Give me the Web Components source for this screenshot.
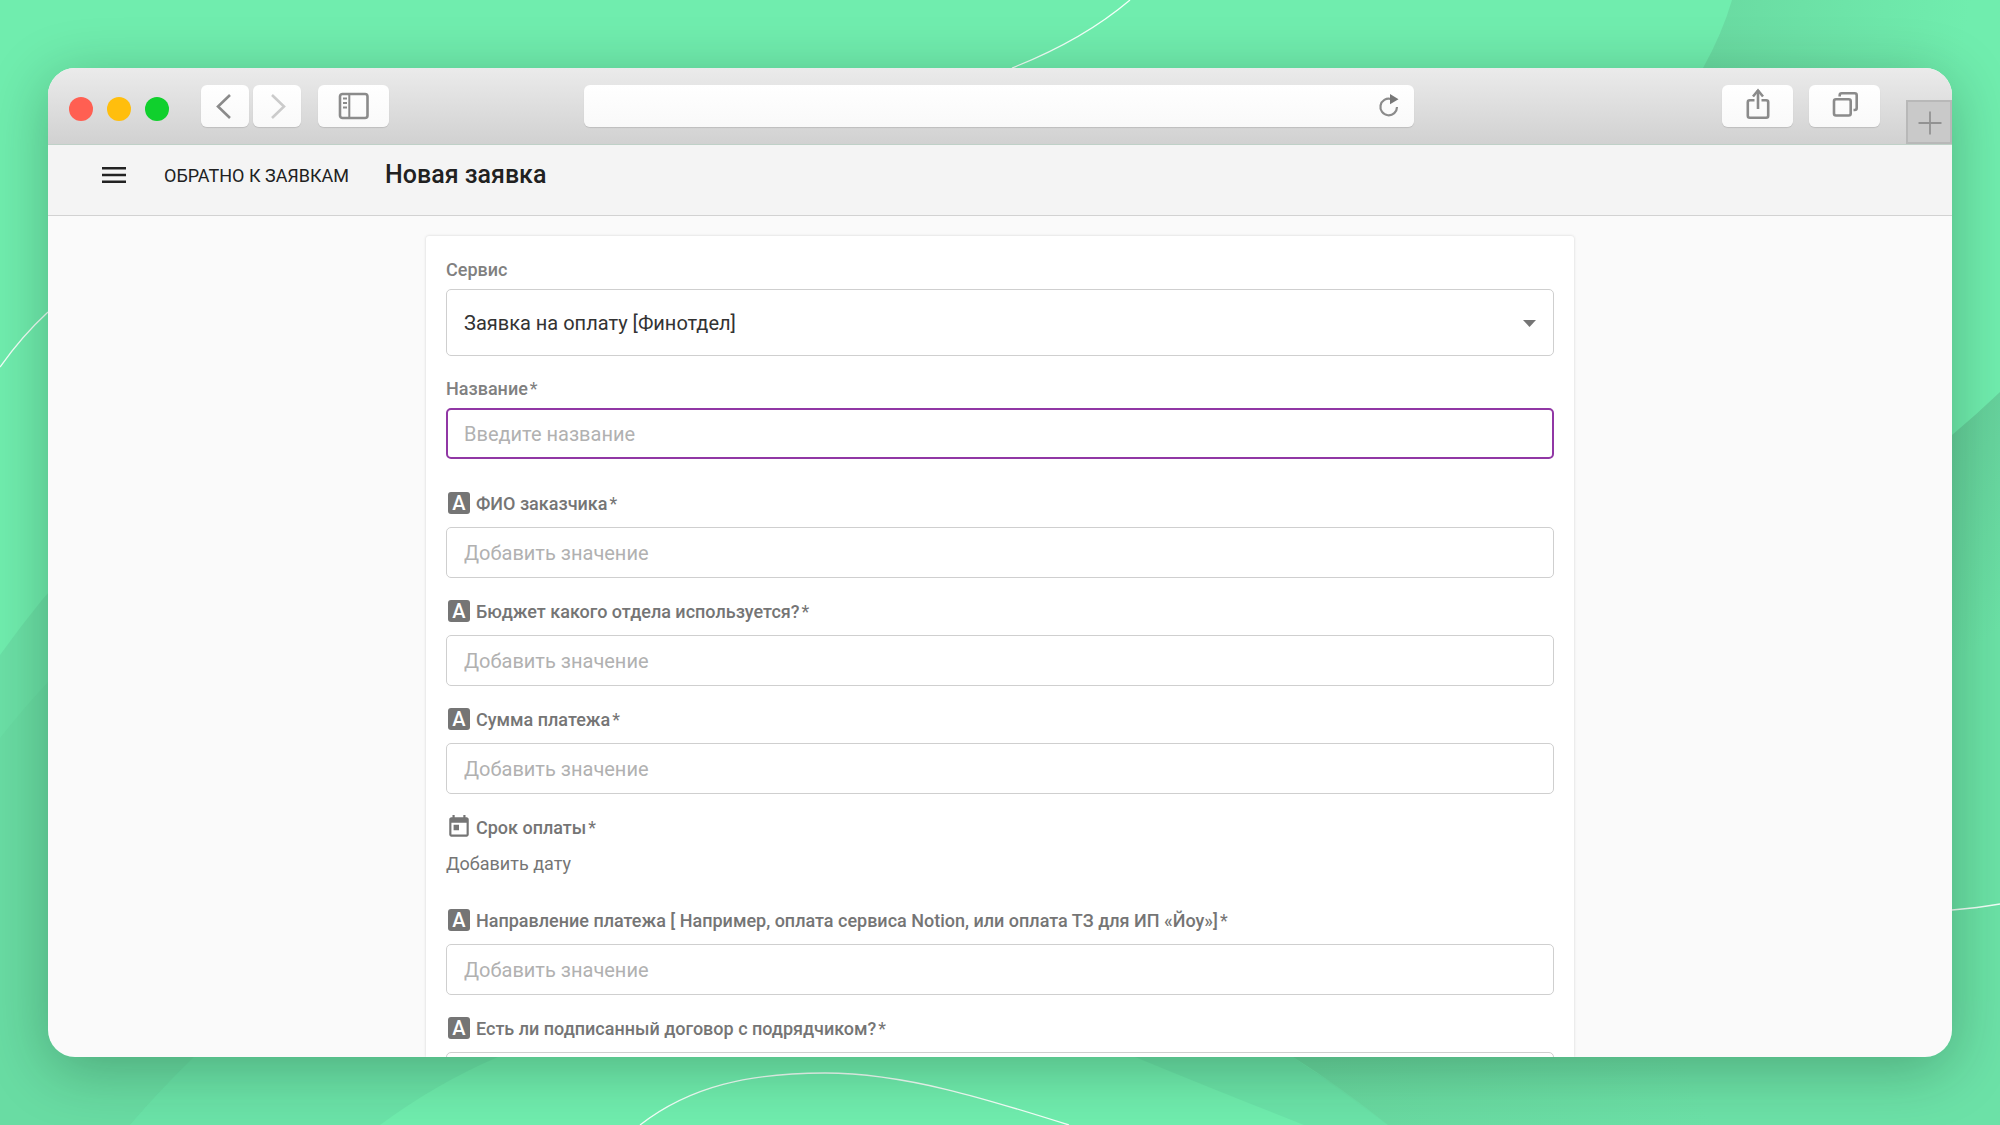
<!DOCTYPE html>
<html lang="ru">
<head>
<meta charset="utf-8">
<title>Новая заявка</title>
<style>
  html, body { height: 100%; margin: 0; }
  body { background: #70edae; overflow: hidden; font-family: Roboto, "Liberation Sans", sans-serif; }
</style>
</head>
<body>
<desktop-scene>
  <browser-window>
    <browser-toolbar slot="toolbar"></browser-toolbar>
    <app-header slot="header" heading="Новая заявка">Обратно к заявкам</app-header>
    <request-card>
      <service-select label="Сервис"><option>Заявка на оплату [Финотдел]</option></service-select>
      <name-field label="Название" placeholder="Введите название"></name-field>
      <text-row placeholder="Добавить значение">ФИО заказчика</text-row>
      <text-row placeholder="Добавить значение">Бюджет какого отдела используется?</text-row>
      <text-row placeholder="Добавить значение">Сумма платежа</text-row>
      <date-row action="Добавить дату">Срок оплаты</date-row>
      <text-row placeholder="Добавить значение">Направление платежа [ Например, оплата сервиса Notion, или оплата ТЗ для ИП «Йоу»]</text-row>
      <text-row>Есть ли подписанный договор с подрядчиком?</text-row>
    </request-card>
  </browser-window>
</desktop-scene>

<script>
const define = (name, render, after) => customElements.define(name, class extends HTMLElement {
  connectedCallback() {
    if (this.shadowRoot) return;
    this.attachShadow({ mode: 'open' }).innerHTML = render(this);
    if (after) after(this, this.shadowRoot);
  }
});

const resetCss = `
  :host, *, *::before, *::after { box-sizing: border-box; }
  button, input, select { font: inherit; color: inherit; margin: 0; }
  button { border: 0; padding: 0; background: none; cursor: pointer; }
  svg { display: block; }
`;
const fieldCss = `
  .box { display: block; width: 100%; height: 51px; padding: 0 17px; border: 1px solid #cfcfcf; border-radius: 5px;
         background: #fff; color: #333; font-size: 20px; outline: none; }
  .box::placeholder { color: #b1b1b1; opacity: 1; }
  .label { display: block; line-height: 24px; font-size: 18px; font-weight: 500; color: #808080; }
  .star { font-weight: 400; margin-left: 2px; }
`;
const rowCss = `
  .head { display: flex; align-items: center; gap: 4px; height: 30px; font-size: 18px; font-weight: 500; color: #757575; }
  .head .icon { flex: none; width: 26px; height: 26px; display: grid; place-items: center; }
  .head label, .head .title { white-space: nowrap; }
`;

define('desktop-scene', () => `
  <style>${resetCss}
    :host { display: grid; grid-template: minmax(0, 1fr) / minmax(0, 1fr); position: relative; height: 100vh; padding: 68px 48px; overflow: hidden; }
    .art { position: absolute; inset: 0; width: 100%; height: 100%; }
  </style>
  <svg class="art" viewBox="0 0 2000 1125" preserveAspectRatio="none" aria-hidden="true">
    <defs>
      <linearGradient id="top" gradientUnits="userSpaceOnUse" x1="1715" y1="30" x2="1960" y2="70">
        <stop offset="0" stop-color="#6adba2"/><stop offset="1" stop-color="#6adba2" stop-opacity="0"/>
      </linearGradient>
      <linearGradient id="side" gradientUnits="userSpaceOnUse" x1="1975" y1="410" x2="2090" y2="560">
        <stop offset="0" stop-color="#66d29c"/><stop offset="1" stop-color="#6be2a6"/>
      </linearGradient>
      <linearGradient id="foot" gradientUnits="userSpaceOnUse" x1="1330" y1="1100" x2="1640" y2="960">
        <stop offset="0" stop-color="#69d9a0"/><stop offset="1" stop-color="#6ce1a7"/>
      </linearGradient>
    </defs>
    <path d="M1732 0Q1722 34 1703 68L1600 240 1952 435 2000 392V0Z" fill="url(#top)"/>
    <path d="M2000 392Q1976 415 1952 435L1400 800V1125H2000Z" fill="url(#side)"/>
    <path d="M0 655Q20 627 42 600L200 420 1200 1000 1400 1125H0Z" fill="#6be0a6"/>
    <path d="M0 738Q22 710 48 682L240 480 700 900 240 1010Q212 1038 194 1057 160 1090 130 1125H0Z" fill="#69dca3"/>
    <path d="M194 1057L260 1000H1270L1293 1057Q1340 1090 1388 1125H130Q160 1090 194 1057Z" fill="#6be3a8"/>
    <path d="M380 1125Q437 1083 498 1057Q800 950 1135 1057Q1215 1090 1304 1125Z" fill="#70edae"/>
    <path d="M1250 1020L1293 1057Q1342 1088 1388 1125H2000V1000Z" fill="url(#foot)"/>
    <g fill="none" stroke="#f2fff8" stroke-width="1.3">
      <path d="M1130 0Q1083 40 1012 68M0 367Q22 336 48 312M1952 910Q1978 908 2000 904"/>
      <path d="M640 1125C690 1086 750 1073 825 1073C905 1073 990 1100 1069 1125"/>
    </g>
  </svg>
  <slot></slot>
`);

define('browser-window', () => `
  <style>${resetCss}
    :host { position: relative; display: flex; flex-direction: column; min-width: 0; min-height: 0; border-radius: 27px;
            box-shadow: 0 12px 60px rgba(0, 30, 10, .28); }
    .clip { display: flex; flex-direction: column; min-height: 0; flex: 1; overflow: hidden; border-radius: inherit; background: #fafafa; }
    main { flex: 1; min-height: 0; padding: 20px 0 0; overflow: hidden; display: flex; flex-direction: column; align-items: center; }
  </style>
  <div class="clip"><slot name="toolbar"></slot><slot name="header"></slot><main><slot></slot></main></div>
`);

define('browser-toolbar', () => `
  <style>${resetCss}
    :host { display: flex; flex: none; align-items: flex-start; height: 77px; padding: 17px 0 0 21px;
            background: linear-gradient(#ebebeb, #d1d1d1); border-bottom: 1px solid #bfd0c7; }
    .dots { display: flex; gap: 14px; padding-top: 12px; margin-right: 32px; }
    .dots button { width: 24px; height: 24px; border-radius: 50%; }
    .nav { display: flex; gap: 4px; margin-right: 17px; }
    .btn { display: grid; place-items: center; flex: none; width: 71px; height: 42px; border-radius: 6px;
           background: linear-gradient(#fff, #f9f9f9); box-shadow: 0 1px 1px rgba(0, 0, 0, .12); }
    .nav .btn { width: 48px; }
    .address { display: flex; align-items: center; flex: 831 1 0; min-width: 0; height: 42px; border-radius: 6px;
               background: linear-gradient(#fff, #f9f9f9); box-shadow: 0 1px 1px rgba(0, 0, 0, .12); }
    .address input { flex: 1; min-width: 0; height: 100%; padding: 0 16px; border: 0; outline: 0; background: none; }
    .address button { margin-right: 14px; }
    .gap-l { flex: 195 1 0; } .gap-r { flex: 308 1 0; }
    .actions { display: flex; gap: 16px; margin-right: 26px; }
    .plus { display: grid; place-items: center; width: 46px; padding: 2px 0 0 2px; align-self: flex-end; height: 44px; background: #c9c9c9; border: 2px solid #b8b8b8; }
    svg { fill: none; stroke: #8b8b8b; stroke-width: 2.6; }
  </style>
  <div class="dots">
    <button aria-label="Закрыть" style="background:#ff5f52"></button>
    <button aria-label="Свернуть" style="background:#ffbe0d"></button>
    <button aria-label="Развернуть" style="background:#10d02d"></button>
  </div>
  <div class="nav">
    <button class="btn" aria-label="Назад"><svg width="32" height="32" viewBox="0 0 32 32"><path d="M21 5 9 16.500 21 28"/></svg></button>
    <button class="btn" aria-label="Вперёд"><svg width="32" height="32" viewBox="0 0 32 32" style="stroke:#cbcbcb"><path d="M11 5 23 16.500 11 28"/></svg></button>
  </div>
  <button class="btn" aria-label="Боковая панель"><svg width="32" height="30" viewBox="0 0 32 30"><rect x="2" y="3" width="27.500" height="24" rx="2.500"/><path d="M11.300 3V27" stroke-width="2"/><path d="M5 7.500h4M5 12h4M5 16.500h4" stroke-width="1.800"/></svg></button>
  <span class="gap-l"></span>
  <div class="address"><input type="text" aria-label="Адрес">
    <button aria-label="Обновить"><svg width="24" height="28" viewBox="0 0 24 28"><path d="M15 7A8.300 8.300 0 1 0 21 15" stroke-width="2.200"/><path d="M14 2 22.500 7.200 14 12.200Z" fill="#777" stroke="none"/></svg></button>
  </div>
  <span class="gap-r"></span>
  <div class="actions">
    <button class="btn" aria-label="Поделиться"><svg width="28" height="36" viewBox="0 0 28 36"><path d="M10.500 12.300H5.800A2 2 0 0 0 3.800 14.300V27.700A2 2 0 0 0 5.800 29.700H22.200A2 2 0 0 0 24.200 27.700V14.300A2 2 0 0 0 22.200 12.300H17.500"/><path d="M14 21V2" /><path d="M9 8.500 14 2.500 19 8.500"/></svg></button>
    <button class="btn" aria-label="Все вкладки"><svg width="30" height="32" viewBox="0 0 30 32"><rect x="4" y="9.300" width="16.700" height="16.200" rx="2"/><path d="M9.700 6.500V5.300A2 2 0 0 1 11.700 3.300H24.700A2 2 0 0 1 26.700 5.300V18A2 2 0 0 1 24.700 20H23.500"/></svg></button>
  </div>
  <button class="plus" aria-label="Новая вкладка"><svg width="24" height="24" viewBox="0 0 24 24" style="stroke:#929292;stroke-width:1.800"><path d="M12 .500V23.500M.500 12H23.500"/></svg></button>
`);

define('app-header', el => `
  <style>${resetCss}
    :host { display: flex; flex: none; align-items: center; height: 71px; padding: 0 50px 10px; background: #f4f4f4; border-bottom: 1px solid #d2d2d2; color: #212121; }
    .menu { width: 32px; height: 32px; display: grid; place-items: center; margin-right: 34px; }
    a { color: inherit; text-decoration: none; text-transform: uppercase; font-size: 18px; white-space: nowrap; margin-right: 36px; }
    h1 { margin: 0; font-size: 25px; font-weight: 500; line-height: 32px; white-space: nowrap; }
  </style>
  <button class="menu" aria-label="Меню"><svg width="24" height="18" viewBox="0 0 24 18" fill="#222"><path d="M0 1h24v2.500H0zM0 7.800h24v2.500H0zM0 14.500h24v2.500H0z"/></svg></button>
  <a href="#"><slot></slot></a><h1>${el.getAttribute('heading')}</h1>
`);

define('request-card', () => `
  <style>
    :host { display: block; flex: 1; min-height: 0; overflow: hidden; box-sizing: border-box; width: 100%; max-width: 1148px; padding: 22px 20px 0; background: #fff;
            border-radius: 3px 3px 0 0; box-shadow: 0 0 3px rgba(0, 0, 0, .16); }
  </style><slot></slot>
`);

define('service-select', el => `
  <style>${resetCss}${fieldCss}
    :host { display: block; margin-bottom: 21px; }
    .wrap { position: relative; margin-top: 7px; }
    select.box { height: 67px; appearance: none; padding-right: 40px; }
    svg { position: absolute; right: 18px; top: 50%; margin-top: -3px; pointer-events: none; }
  </style>
  <label class="label" for="s">${el.getAttribute('label')}</label>
  <div class="wrap"><select class="box" id="s"></select><svg width="13" height="7" viewBox="0 0 13 7"><path d="M0 0H13L6.500 7Z" fill="#757575"/></svg></div>
`, (el, root) => root.querySelector('select').append(...[...el.children].map(o => o.cloneNode(true))));

define('name-field', el => `
  <style>${resetCss}${fieldCss}
    :host { display: block; margin-bottom: 29px; }
    input.box { margin-top: 7px; border: 2px solid #9137a5; padding: 0 16px; }
  </style>
  <label class="label" for="n">${el.getAttribute('label')}<span class="star">*</span></label>
  <input class="box" id="n" type="text" placeholder="${el.getAttribute('placeholder')}" required>
`);

define('text-row', el => `
  <style>${resetCss}${fieldCss}${rowCss}
    :host { display: block; margin-bottom: 18px; }
    .badge { width: 22px; height: 22px; border-radius: 3px; background: #757575; color: #fff; font-size: 20px; line-height: 22px; text-align: center; }
    input.box { margin-top: 9px; }
  </style>
  <div class="head"><span class="icon" aria-hidden="true"><span class="badge">A</span></span>
    <label for="v"><slot></slot><span class="star">*</span></label></div>
  <input class="box" id="v" type="text" placeholder="${el.getAttribute('placeholder') || ''}" required>
`);

define('date-row', el => `
  <style>${resetCss}${fieldCss}${rowCss}
    :host { display: block; margin-bottom: 29px; }
    .add { display: block; margin-top: 10px; height: 24px; line-height: 24px; font-size: 18px; color: #757575; }
  </style>
  <div class="head"><span class="icon" aria-hidden="true"><svg width="26" height="26" viewBox="0 0 24 24" fill="#757575"><path d="M19 3h-1V1h-2v2H8V1H6v2H5c-1.110 0-1.990.900-1.990 2L3 19c0 1.100.890 2 2 2h14c1.100 0 2-.900 2-2V5c0-1.100-.900-2-2-2zm0 16H5V8h14v11zM7 10h5v5H7z"/></svg></span>
    <span class="title"><slot></slot><span class="star">*</span></span></div>
  <button class="add" type="button">${el.getAttribute('action')}</button>
`);
</script>
</body>
</html>
